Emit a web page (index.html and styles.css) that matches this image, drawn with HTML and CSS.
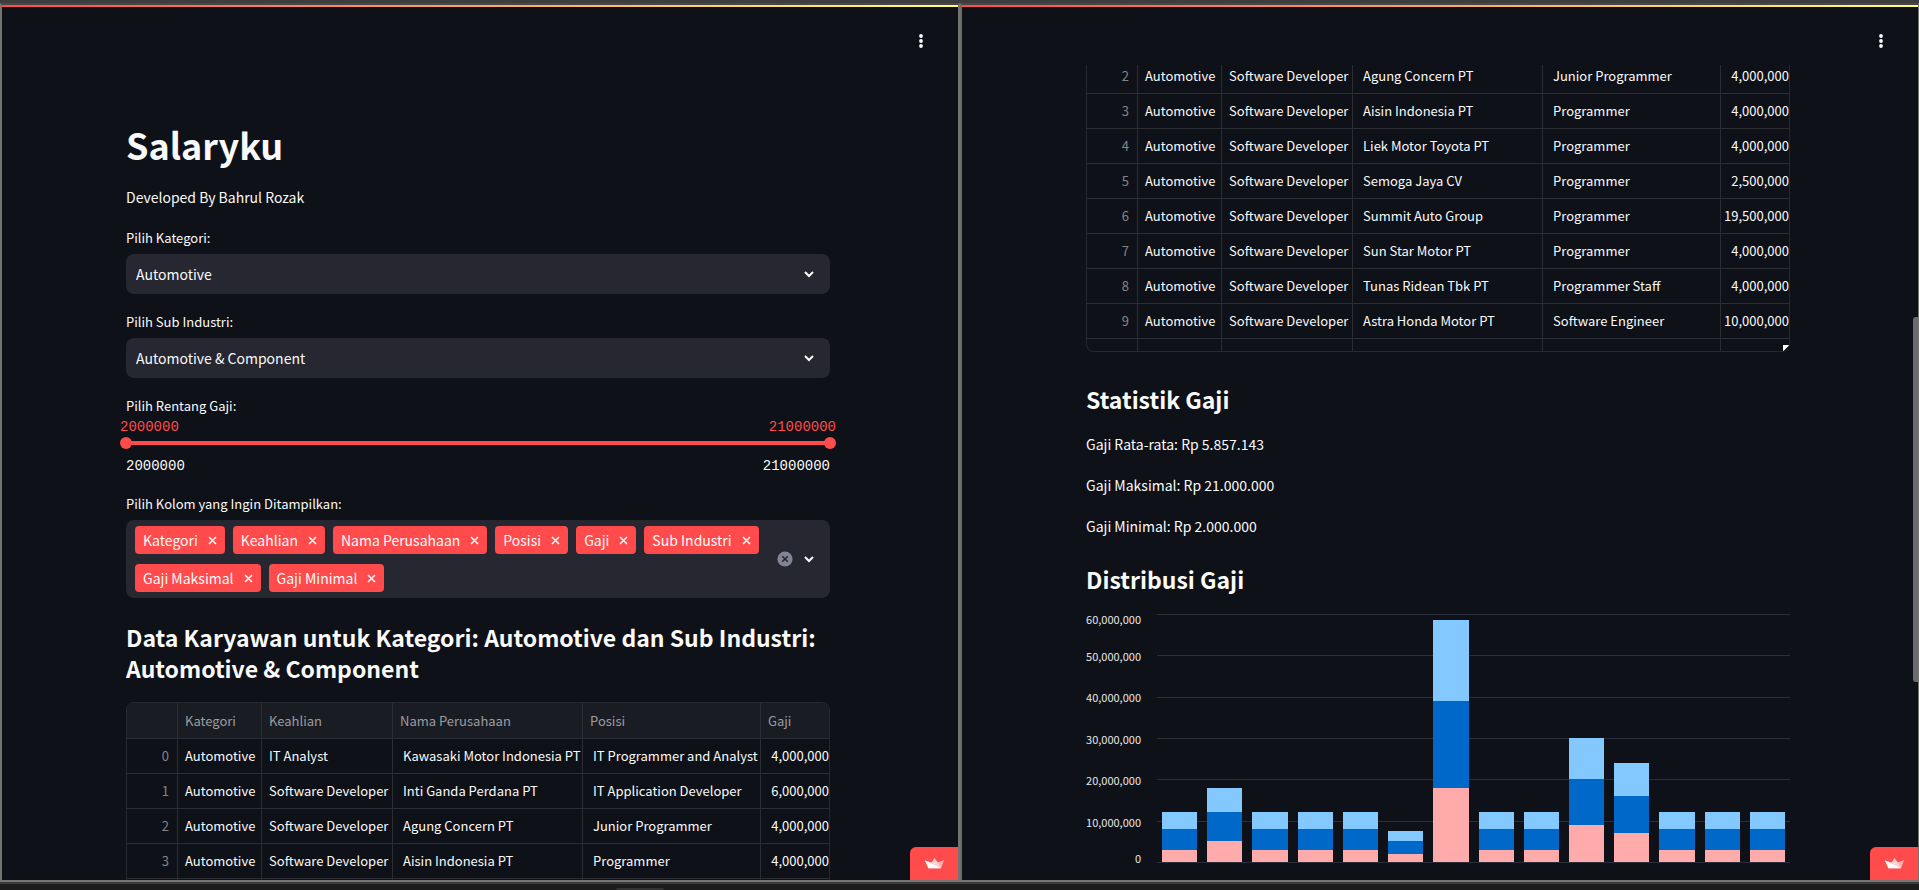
FILE: index.html
```html
<!DOCTYPE html>
<html lang="id">
<head>
<meta charset="utf-8">
<title>Salaryku</title>
<link rel="stylesheet" href="styles.css">
</head>
<body>
<svg class="defs" aria-hidden="true">
  <symbol id="dots" viewBox="0 0 4 14"><circle cx="2" cy="2" r="1.9"/><circle cx="2" cy="7" r="1.9"/><circle cx="2" cy="12" r="1.9"/></symbol>
  <symbol id="chevron" viewBox="0 0 10 7"><path d="M1 1l4 4 4-4" fill="none" stroke="currentColor" stroke-width="2"/></symbol>
  <symbol id="cross" viewBox="0 0 9 9"><path d="M1 1l7 7M8 1l-7 7" fill="none" stroke="currentColor" stroke-width="1.5"/></symbol>
  <symbol id="clear" viewBox="0 0 16 16"><circle cx="8" cy="8" r="7.6" fill="#808495"/><path d="M5.2 5.2l5.6 5.6M10.8 5.2l-5.6 5.6" stroke="#262730" stroke-width="1.6"/></symbol>
  <symbol id="crown" viewBox="0 0 19 11"><path d="M0 2.5L6.500 4.500 9.500 0l3.200 4.200L19 2.200 16 10.300H3.500z" fill="#fff" opacity=".75"/><path d="M0 2.500L16 10.300H3.500z" fill="#fff"/><path d="M12.700 4.200L19 2.200 16 10.300z" fill="#ff4b4b" opacity=".25"/></symbol>
</svg>
<div class="windows">
  <section class="panel">
    <div class="rainbow"></div>
    <header class="bar"><button class="menu" aria-label="Menu"><svg><use href="#dots"/></svg></button></header>
    <main class="main">
      <h1 class="title">Salaryku</h1>
      <p class="byline">Developed By Bahrul Rozak</p>
      <div class="field">
        <label class="label" for="kategori">Pilih Kategori:</label>
        <div class="select"><select id="kategori"><option>Automotive</option></select><svg class="chev"><use href="#chevron"/></svg></div>
      </div>
      <div class="field">
        <label class="label" for="sub">Pilih Sub Industri:</label>
        <div class="select"><select id="sub"><option>Automotive &amp; Component</option></select><svg class="chev"><use href="#chevron"/></svg></div>
      </div>
      <div class="field slider">
        <label class="label" for="low">Pilih Rentang Gaji:</label>
        <div class="values"><output for="low">2000000</output><output for="high">21000000</output></div>
        <div class="range">
          <div class="track"></div>
          <input id="low" type="range" min="2000000" max="21000000" value="2000000">
          <input id="high" type="range" min="2000000" max="21000000" value="21000000" aria-label="Gaji tertinggi">
        </div>
        <div class="ticks"><span>2000000</span><span>21000000</span></div>
      </div>
      <div class="field" role="group" aria-labelledby="kolom">
        <div class="label" id="kolom">Pilih Kolom yang Ingin Ditampilkan:</div>
        <div class="multi">
          <div class="tags">
            <span class="tag">Kategori<button aria-label="Hapus Kategori"><svg><use href="#cross"/></svg></button></span>
            <span class="tag">Keahlian<button aria-label="Hapus Keahlian"><svg><use href="#cross"/></svg></button></span>
            <span class="tag">Nama Perusahaan<button aria-label="Hapus Nama Perusahaan"><svg><use href="#cross"/></svg></button></span>
            <span class="tag">Posisi<button aria-label="Hapus Posisi"><svg><use href="#cross"/></svg></button></span>
            <span class="tag">Gaji<button aria-label="Hapus Gaji"><svg><use href="#cross"/></svg></button></span>
            <span class="tag">Sub Industri<button aria-label="Hapus Sub Industri"><svg><use href="#cross"/></svg></button></span>
            <span class="tag">Gaji Maksimal<button aria-label="Hapus Gaji Maksimal"><svg><use href="#cross"/></svg></button></span>
            <span class="tag">Gaji Minimal<button aria-label="Hapus Gaji Minimal"><svg><use href="#cross"/></svg></button></span>
          </div>
          <button class="clear" aria-label="Hapus semua"><svg><use href="#clear"/></svg></button>
          <button class="open" aria-label="Buka pilihan"><svg><use href="#chevron"/></svg></button>
        </div>
      </div>
      <h2 class="heading">Data Karyawan untuk Kategori: Automotive dan Sub Industri: Automotive &amp; Component</h2>
      <div class="grid">
        <table>
          <colgroup><col class="c-idx"><col class="c-kat"><col class="c-keah"><col class="c-nama"><col class="c-pos"><col class="c-gaji"></colgroup>
          <thead><tr><th></th><th>Kategori</th><th>Keahlian</th><th>Nama Perusahaan</th><th>Posisi</th><th>Gaji</th></tr></thead>
          <tbody>
            <tr><td>0</td><td>Automotive</td><td>IT Analyst</td><td>Kawasaki Motor Indonesia PT</td><td>IT Programmer and Analyst</td><td>4,000,000</td></tr>
            <tr><td>1</td><td>Automotive</td><td>Software Developer</td><td>Inti Ganda Perdana PT</td><td>IT Application Developer</td><td>6,000,000</td></tr>
            <tr><td>2</td><td>Automotive</td><td>Software Developer</td><td>Agung Concern PT</td><td>Junior Programmer</td><td>4,000,000</td></tr>
            <tr><td>3</td><td>Automotive</td><td>Software Developer</td><td>Aisin Indonesia PT</td><td>Programmer</td><td>4,000,000</td></tr>
            <tr><td></td><td></td><td></td><td></td><td></td><td></td></tr>
          </tbody>
        </table>
      </div>
    </main>
    <button class="badge" aria-label="Streamlit"><svg><use href="#crown"/></svg></button>
  </section>
  <section class="panel">
    <div class="rainbow"></div>
    <header class="bar"><button class="menu" aria-label="Menu"><svg><use href="#dots"/></svg></button></header>
    <main class="main">
      <div class="grid scrolled">
        <table>
          <colgroup><col class="c-idx"><col class="c-kat"><col class="c-keah"><col class="c-nama"><col class="c-pos"><col class="c-gaji"></colgroup>
          <tbody>
            <tr><td>2</td><td>Automotive</td><td>Software Developer</td><td>Agung Concern PT</td><td>Junior Programmer</td><td>4,000,000</td></tr>
            <tr><td>3</td><td>Automotive</td><td>Software Developer</td><td>Aisin Indonesia PT</td><td>Programmer</td><td>4,000,000</td></tr>
            <tr><td>4</td><td>Automotive</td><td>Software Developer</td><td>Liek Motor Toyota PT</td><td>Programmer</td><td>4,000,000</td></tr>
            <tr><td>5</td><td>Automotive</td><td>Software Developer</td><td>Semoga Jaya CV</td><td>Programmer</td><td>2,500,000</td></tr>
            <tr><td>6</td><td>Automotive</td><td>Software Developer</td><td>Summit Auto Group</td><td>Programmer</td><td>19,500,000</td></tr>
            <tr><td>7</td><td>Automotive</td><td>Software Developer</td><td>Sun Star Motor PT</td><td>Programmer</td><td>4,000,000</td></tr>
            <tr><td>8</td><td>Automotive</td><td>Software Developer</td><td>Tunas Ridean Tbk PT</td><td>Programmer Staff</td><td>4,000,000</td></tr>
            <tr><td>9</td><td>Automotive</td><td>Software Developer</td><td>Astra Honda Motor PT</td><td>Software Engineer</td><td>10,000,000</td></tr>
            <tr><td></td><td></td><td></td><td></td><td></td><td></td></tr>
          </tbody>
        </table>
        <span class="grip"></span>
      </div>
      <h2 class="heading stat">Statistik Gaji</h2>
      <p class="line">Gaji Rata-rata: Rp 5.857.143</p>
      <p class="line">Gaji Maksimal: Rp 21.000.000</p>
      <p class="line">Gaji Minimal: Rp 2.000.000</p>
      <h2 class="heading dist">Distribusi Gaji</h2>
      <div class="chart">
        <div class="axis"><span>60,000,000</span><span>50,000,000</span><span>40,000,000</span><span>30,000,000</span><span>20,000,000</span><span>10,000,000</span><span>0</span></div>
        <div class="plot">
          <div class="rules"><i></i><i></i><i></i><i></i><i></i><i></i><i></i></div>
          <div class="bars" id="bars"></div>
        </div>
      </div>
    </main>
    <div class="thumb"></div>
    <button class="badge" aria-label="Streamlit"><svg><use href="#crown"/></svg></button>
  </section>
</div>
<div class="taskbar"><span class="tab"></span></div>
<script src="chart.js"></script>
</body>
</html>
```
FILE: chart.js
```js
// Stacked salaries in millions: [top, middle, bottom]
const rows = [
  [4, 5, 3], [6, 7, 5], [4, 5, 3], [4, 5, 3], [4, 5, 3], [2.5, 3, 2], [19.5, 21, 18],
  [4, 5, 3], [4, 5, 3], [10, 11, 9], [8, 9, 7], [4, 5, 3], [4, 5, 3], [4, 5, 3]
];
const names = ["light", "blue", "pink"];
const bars = document.getElementById("bars");
for (const row of rows) {
  const bar = document.createElement("div");
  bar.className = "stack";
  row.forEach((value, i) => {
    const part = document.createElement("div");
    part.className = names[i];
    part.style.height = (value / 60 * 100) + "%";
    bar.append(part);
  });
  bars.append(bar);
}
```
FILE: styles.css
```css
* { box-sizing: border-box; }
body {
  margin: 0; height: 100vh; display: flex; flex-direction: column; overflow: hidden;
  background: #0e1117; color: #fafafa;
  font: 14px/26px "Noto Sans CJK SC", "Noto Sans", sans-serif;
}
h1, h2, p { margin: 0; }
button { border: 0; padding: 0; background: none; color: inherit; font: inherit; display: flex; align-items: center; justify-content: center; }
svg { display: block; fill: currentColor; }
.defs { position: absolute; width: 0; height: 0; }

.windows { flex: 1; min-height: 0; display: flex; border-top: 3px solid #3d3d3d; border-bottom: 2px solid #747474; }
.panel { flex: 1; min-width: 0; position: relative; display: flex; flex-direction: column; border-left: 2px solid #747474; border-right: 2px solid #747474; border-top: 2px solid #474747; overflow: hidden; }
.panel + .panel { border-left-color: #6b6b6b; border-right-width: 1px; }
.rainbow { height: 2px; background: linear-gradient(90deg, #ff4b4b, #fffd80); }
.bar { height: 58px; flex: none; display: flex; justify-content: flex-end; padding: 20px 28px 0 0; }
.menu { width: 18px; height: 28px; }
.menu svg { width: 4px; height: 14px; }
.main { flex: 1; min-height: 0; overflow: hidden; padding: 0 128px 0 124px; }

.title { font-size: 36px; line-height: 52px; font-weight: 700; padding-top: 53px; }
.byline { padding-top: 14px; }
.field { padding-top: 18px; }
.label { display: block; font-size: 13px; line-height: 20px; padding-bottom: 6px; }
.select { display: grid; align-items: center; }
.select > * { grid-area: 1 / 1; }
.select select { appearance: none; width: 100%; height: 40px; border: 0; border-radius: 8px; padding: 0 40px 0 10px; background: #262730; color: inherit; font: inherit; }
.chev { justify-self: end; margin-right: 16px; width: 10px; height: 7px; pointer-events: none; }

.slider .label { padding-bottom: 1px; }
.values, .ticks { display: flex; justify-content: space-between; font: 14px/20px "Liberation Mono", monospace; }
.values { color: #ff4b4b; margin: 0 -6px; }
.ticks { padding-top: 7px; height: 27px; }
.range { display: grid; align-items: center; height: 12px; }
.range > * { grid-area: 1 / 1; }
.track { height: 4px; background: #ff4b4b; }
.range input { appearance: none; background: none; height: 12px; margin: 0 -6px; pointer-events: none; }
.range input::-webkit-slider-thumb { appearance: none; width: 12px; height: 12px; border-radius: 50%; background: #ff4b4b; pointer-events: auto; }

.multi { display: flex; align-items: center; background: #262730; border-radius: 8px; padding: 6px 16px 6px 9px; }
.tags { flex: 1; display: flex; flex-wrap: wrap; gap: 10px 8px; }
.tag { display: flex; align-items: center; height: 28px; padding: 0 8px; gap: 10px; border-radius: 4px; background: #ff4b4b; }
.tag svg { width: 9px; height: 9px; }
.clear svg { width: 16px; height: 16px; }
.open { margin-left: 11px; }
.open svg { width: 10px; height: 7px; }

.heading { font-size: 23px; line-height: 31px; font-weight: 600; padding: 24px 0 18px; }

.grid { position: relative; border: 1px solid #26292f; border-radius: 8px 8px 0 0; overflow: hidden; }
.grid table { table-layout: fixed; border-collapse: separate; border-spacing: 0; width: 100%; font-size: 13px; line-height: 20px; }
.c-idx { width: 51px; } .c-kat { width: 84px; } .c-keah { width: 131px; } .c-nama { width: 190px; } .c-pos { width: 178px; }
.grid th, .grid td { height: 35px; padding: 0 0 0 7px; border-right: 1px solid #2b2d33; border-bottom: 1px solid #2b2d33; text-align: left; font-weight: 400; white-space: nowrap; }
.grid th { background: #1a1c23; color: #9c9da1; height: 36px; }
.grid td:nth-child(4), .grid td:nth-child(5) { padding-left: 10px; }
.grid td:first-child { text-align: right; padding-right: 8px; color: #83858a; }
.grid th:last-child, .grid td:last-child { border-right: 0; }
.grid td:last-child { text-align: right; padding: 0; }
.scrolled { height: 293px; margin-top: -6px; border-top: 0; border-radius: 0 0 8px 8px; }
.grip { position: absolute; right: 0; bottom: 0; width: 6px; height: 6px; background: linear-gradient(135deg, #fff 55%, #0e1117 56%); }

.stat { padding: 32px 0 16px; }
.line { padding-bottom: 15px; }
.dist { padding: 10px 0 18px; }

.chart { display: flex; gap: 16px; height: 249px; margin-top: 1px; }
.axis { width: 55px; display: flex; flex-direction: column; justify-content: space-between; text-align: right; font-size: 11px; line-height: 10px; color: #e6e7ea; }
.axis span:first-child { margin-bottom: -5px; }
.axis span:last-child { margin-top: -5px; }
.plot { flex: 1; display: grid; }
.plot > * { grid-area: 1 / 1; }
.rules { display: flex; flex-direction: column; justify-content: space-between; }
.rules i { height: 1px; background: #2b2d38; }
.bars { display: flex; }
.stack { flex: 1; display: flex; flex-direction: column; justify-content: flex-end; padding: 0 5px 1px; }
.light { background: #83c9ff; } .blue { background: #0068c9; } .pink { background: #ffabab; }

.thumb { position: absolute; right: 0; top: 312px; width: 5px; height: 365px; border-radius: 3px 0 0 3px; background: #6b6b6d; }
.badge { position: absolute; right: 0; bottom: 0; width: 48px; height: 33px; background: #ff4b4b; border-radius: 6px 0 0 0; }
.badge svg { width: 19px; height: 11px; }
.taskbar { height: 8px; border-top: 2px solid #3c3c3c; background: #1c1c1c; display: flex; justify-content: center; align-items: flex-end; }
.tab { width: 48px; height: 2px; background: #333; border-radius: 4px 4px 0 0; margin-right: 640px; }
```
